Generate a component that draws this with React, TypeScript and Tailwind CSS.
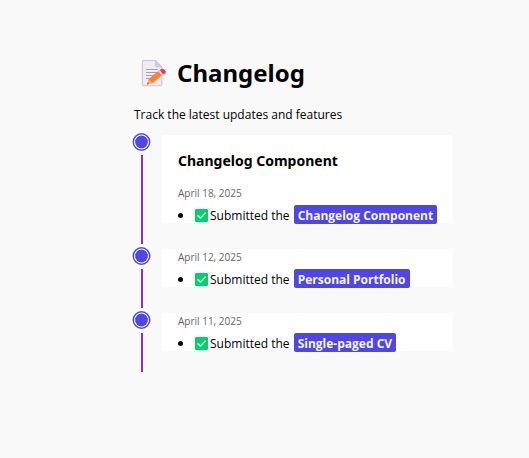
import React from "react";

type Entry = { title?: string; date: string; project: string };

const entries: Entry[] = [
  { title: "Changelog Component", date: "April 18, 2025", project: "Changelog Component" },
  { date: "April 12, 2025", project: "Personal Portfolio" },
  { date: "April 11, 2025", project: "Single-paged CV" },
];

function MemoIcon() {
  return (
    <svg viewBox="0 0 26 28" className="h-7 w-[26px] shrink-0" aria-hidden="true">
      <path d="M2.6 1.5H14.5L20.8 8V25.5a1.2 1.2 0 0 1-1.2 1.2H2.6A1.2 1.2 0 0 1 1.4 25.5V2.7A1.2 1.2 0 0 1 2.6 1.5Z" fill="#f1ebf7" stroke="#cdc4d6" strokeWidth="1.1" />
      <path d="M14.5 1.5V6.8A1.2 1.2 0 0 0 15.7 8H20.8Z" fill="#d5cbdc" stroke="#c8bed2" strokeWidth="0.6" />
      <path d="M5 10.5H17M5 13.5H17M5 16.5H14M5 19.5H10" stroke="#a69cb0" strokeWidth="1" />
      <path d="M6 25.5L7.6 20.2L11.3 24.4Z" fill="#f3ad61" />
      <path d="M6 25.5L6.6 23.6L7.9 25Z" fill="#635994" />
      <path d="M7.6 20.2L17.3 12L20.9 16.5L11.3 24.4Z" fill="#ff822d" />
      <path d="M17.3 12L18.7 10.9L22.2 15.4L20.9 16.5Z" fill="#d3d3d3" />
      <path d="M18.7 10.9L20.2 10Q22 9.1 23.4 10.6L24.6 12.1Q25.4 13.6 24 14.4L22.2 15.4Z" fill="#f8315f" />
    </svg>
  );
}

function CheckIcon() {
  return (
    <svg viewBox="0 0 13 13" className="mr-0.5 size-[13px] shrink-0" aria-hidden="true">
      <rect width="13" height="13" rx="1.3" fill="#00d26a" />
      <path d="M3 6.7L5.4 9.1L10.2 4" fill="none" stroke="#f4f4f4" strokeWidth="1.4" strokeLinecap="round" strokeLinejoin="round" />
    </svg>
  );
}

function Marker() {
  return (
    <svg viewBox="0 0 19 18" className="h-[18px] w-[19px]" aria-hidden="true">
      <circle cx="9.5" cy="9" r="8.2" fill="#ffffff" stroke="#4f46e5" strokeWidth="1.5" />
      <circle cx="9.5" cy="9" r="6.4" fill="#4f46e5" />
    </svg>
  );
}

function TimelineItem({ title, date, project }: Entry) {
  return (
    <li className="flex gap-2.5">
      <div className="-mt-0.5 mb-[5px] flex w-5 shrink-0 flex-col gap-1">
        <Marker />
        <span className="w-0.5 flex-1 self-center bg-[#8a2be2]" />
      </div>
      <article className="mb-[26px] flex min-w-0 flex-1 flex-col bg-white px-4">
        {title && (
          <h2 className="pt-4 pb-3.5 font-['Noto_Sans',sans-serif] text-sm leading-5 font-bold">{title}</h2>
        )}
        <time className="text-[10px] leading-4 text-[#666666]">{date}</time>
        <ul className="mt-1 -mb-px">
          <li className="flex h-[19px] items-center pt-0.5">
            <span className="mr-3 size-[5px] shrink-0 rounded-full bg-black" />
            <CheckIcon />
            <span className="leading-[17px] whitespace-pre">Submitted the </span>
            <strong className="-mt-0.5 ml-px rounded-xs bg-[#4f46e5] px-1 pt-0.5 leading-[17px] font-bold whitespace-nowrap text-[#f5f5f5]">
              {project}
            </strong>
          </li>
        </ul>
      </article>
    </li>
  );
}

export default function App() {
  return (
    <main className="min-h-screen bg-[#f9f9f9] pt-14 pr-[76px] pl-[134px] font-['Open_Sans','Noto_Sans',sans-serif] text-xs text-black">
      <header>
        <h1 className="flex items-center gap-2.5 pl-[7px] font-['Noto_Sans',sans-serif] text-2xl leading-[34px] font-bold">
          <MemoIcon />
          Changelog
        </h1>
        <p className="mt-[17px] leading-4">Track the latest updates and features</p>
      </header>
      <ol className="mt-3 -ml-0.5">
        {entries.map((entry) => (
          <TimelineItem key={entry.date} {...entry} />
        ))}
      </ol>
    </main>
  );
}
